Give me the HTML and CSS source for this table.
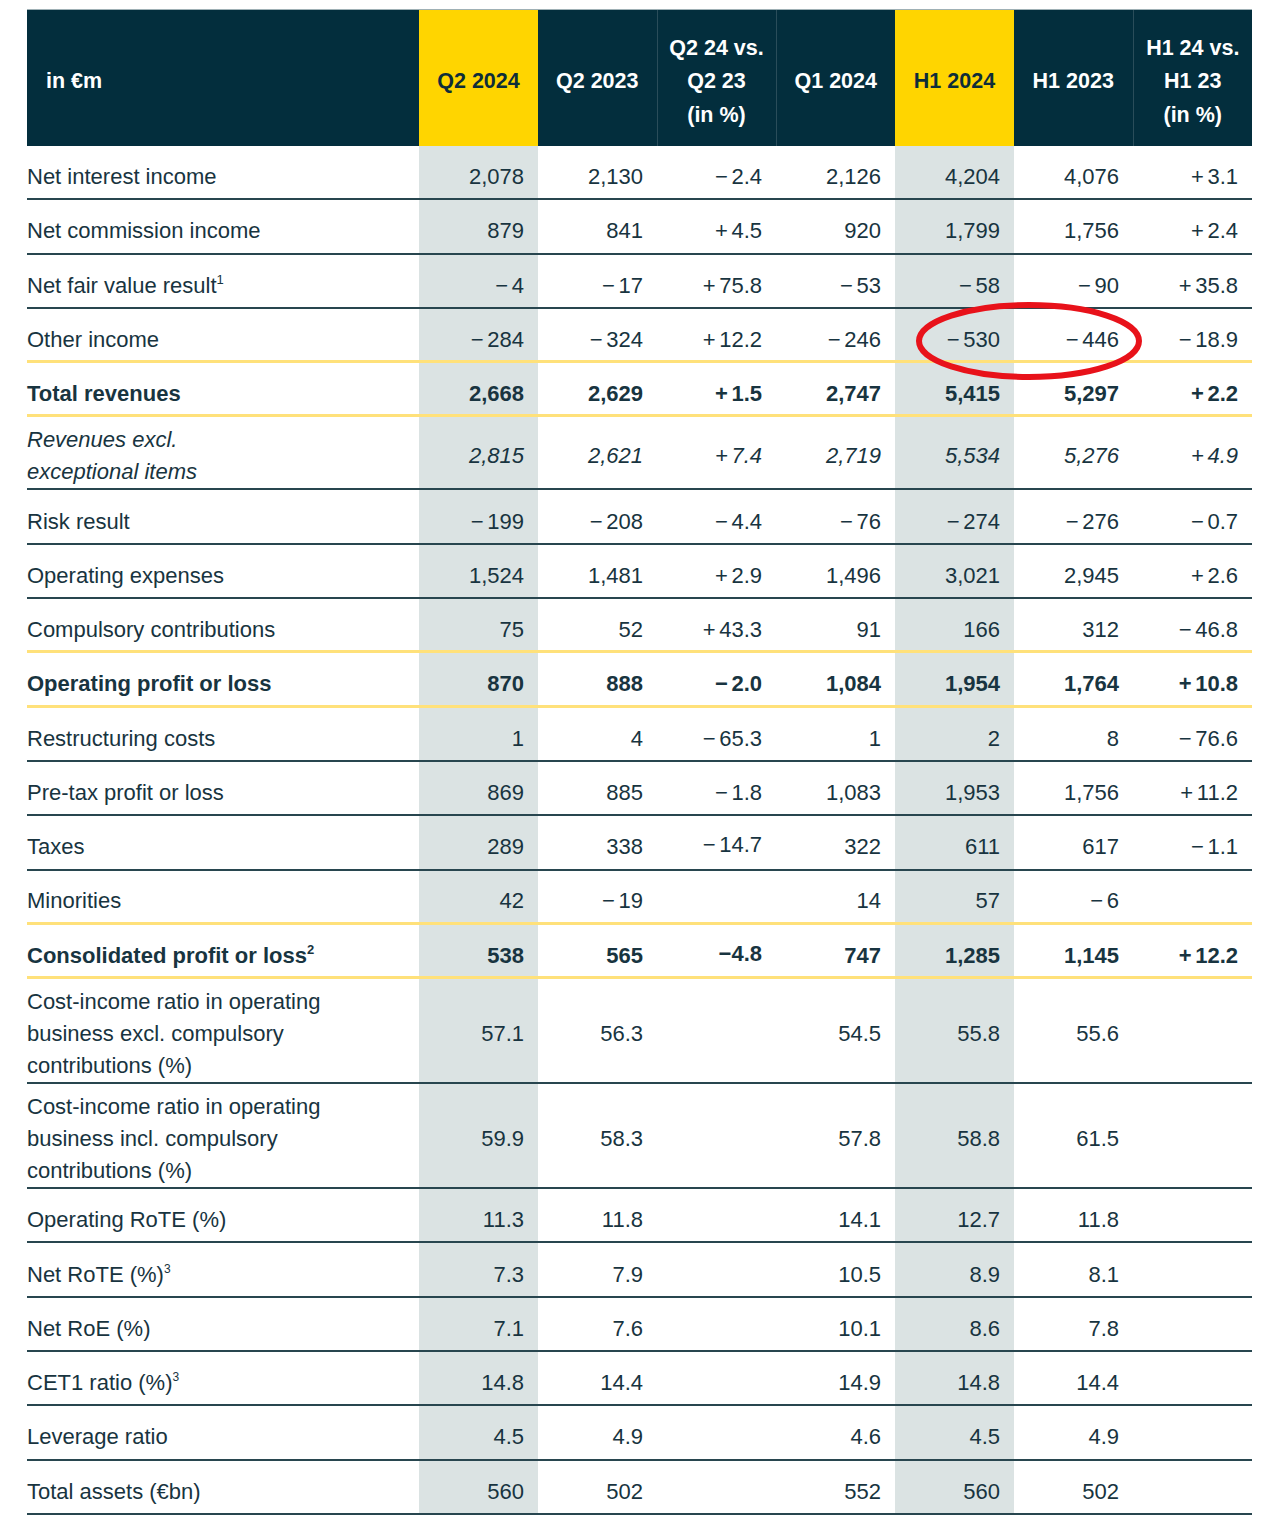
FILE: index.html
```html
<!DOCTYPE html>
<html lang="en">
<head>
<meta charset="utf-8">
<title>Key figures</title>
<link rel="stylesheet" href="styles.css">
</head>
<body>
<div class="page">
<table class="fig">
  <colgroup>
    <col class="c-label"><col class="c-num"><col class="c-num"><col class="c-num"><col class="c-num"><col class="c-num"><col class="c-num"><col class="c-num">
  </colgroup>
  <thead>
    <tr>
      <th class="h-label">in €m</th>
      <th class="hl">Q2 2024</th>
      <th>Q2 2023</th>
      <th class="sep">Q2 24 vs.<br>Q2 23<br>(in %)</th>
      <th class="sep">Q1 2024</th>
      <th class="hl">H1 2024</th>
      <th>H1 2023</th>
      <th class="sep">H1 24 vs.<br>H1 23<br>(in %)</th>
    </tr>
  </thead>
  <tbody>
    <tr><td>Net interest income</td><td>2,078</td><td>2,130</td><td>−&#8198;2.4</td><td>2,126</td><td>4,204</td><td>4,076</td><td>+&#8198;3.1</td></tr>
    <tr><td>Net commission income</td><td>879</td><td>841</td><td>+&#8198;4.5</td><td>920</td><td>1,799</td><td>1,756</td><td>+&#8198;2.4</td></tr>
    <tr><td>Net fair value result<sup>1</sup></td><td>−&#8198;4</td><td>−&#8198;17</td><td>+&#8198;75.8</td><td>−&#8198;53</td><td>−&#8198;58</td><td>−&#8198;90</td><td>+&#8198;35.8</td></tr>
    <tr class="yb"><td>Other income</td><td>−&#8198;284</td><td>−&#8198;324</td><td>+&#8198;12.2</td><td>−&#8198;246</td><td>−&#8198;530</td><td>−&#8198;446</td><td>−&#8198;18.9</td></tr>
    <tr class="bold yb"><td>Total revenues</td><td>2,668</td><td>2,629</td><td>+&#8198;1.5</td><td>2,747</td><td>5,415</td><td>5,297</td><td>+&#8198;2.2</td></tr>
    <tr class="ital two"><td>Revenues excl.<br>exceptional items</td><td>2,815</td><td>2,621</td><td>+&#8198;7.4</td><td>2,719</td><td>5,534</td><td>5,276</td><td>+&#8198;4.9</td></tr>
    <tr><td>Risk result</td><td>−&#8198;199</td><td>−&#8198;208</td><td>−&#8198;4.4</td><td>−&#8198;76</td><td>−&#8198;274</td><td>−&#8198;276</td><td>−&#8198;0.7</td></tr>
    <tr><td>Operating expenses</td><td>1,524</td><td>1,481</td><td>+&#8198;2.9</td><td>1,496</td><td>3,021</td><td>2,945</td><td>+&#8198;2.6</td></tr>
    <tr class="yb"><td>Compulsory contributions</td><td>75</td><td>52</td><td>+&#8198;43.3</td><td>91</td><td>166</td><td>312</td><td>−&#8198;46.8</td></tr>
    <tr class="bold yb"><td>Operating profit or loss</td><td>870</td><td>888</td><td>−&#8198;2.0</td><td>1,084</td><td>1,954</td><td>1,764</td><td>+&#8198;10.8</td></tr>
    <tr><td>Restructuring costs</td><td>1</td><td>4</td><td>−&#8198;65.3</td><td>1</td><td>2</td><td>8</td><td>−&#8198;76.6</td></tr>
    <tr><td>Pre-tax profit or loss</td><td>869</td><td>885</td><td>−&#8198;1.8</td><td>1,083</td><td>1,953</td><td>1,756</td><td>+&#8198;11.2</td></tr>
    <tr><td>Taxes</td><td>289</td><td>338</td><td class="lift">−&#8198;14.7</td><td>322</td><td>611</td><td>617</td><td>−&#8198;1.1</td></tr>
    <tr class="yb"><td>Minorities</td><td>42</td><td>−&#8198;19</td><td></td><td>14</td><td>57</td><td>−&#8198;6</td><td></td></tr>
    <tr class="bold yb"><td>Consolidated profit or loss<sup>2</sup></td><td>538</td><td>565</td><td class="lift">−4.8</td><td>747</td><td>1,285</td><td>1,145</td><td>+&#8198;12.2</td></tr>
    <tr class="three"><td>Cost-income ratio in operating<br>business excl. compulsory<br>contributions (%)</td><td>57.1</td><td>56.3</td><td></td><td>54.5</td><td>55.8</td><td>55.6</td><td></td></tr>
    <tr class="three"><td>Cost-income ratio in operating<br>business incl. compulsory<br>contributions (%)</td><td>59.9</td><td>58.3</td><td></td><td>57.8</td><td>58.8</td><td>61.5</td><td></td></tr>
    <tr><td>Operating RoTE (%)</td><td>11.3</td><td>11.8</td><td></td><td>14.1</td><td>12.7</td><td>11.8</td><td></td></tr>
    <tr><td>Net RoTE (%)<sup class="thin">3</sup></td><td>7.3</td><td>7.9</td><td></td><td>10.5</td><td>8.9</td><td>8.1</td><td></td></tr>
    <tr><td>Net RoE (%)</td><td>7.1</td><td>7.6</td><td></td><td>10.1</td><td>8.6</td><td>7.8</td><td></td></tr>
    <tr><td>CET1 ratio (%)<sup class="thin">3</sup></td><td>14.8</td><td>14.4</td><td></td><td>14.9</td><td>14.8</td><td>14.4</td><td></td></tr>
    <tr><td>Leverage ratio</td><td>4.5</td><td>4.9</td><td></td><td>4.6</td><td>4.5</td><td>4.9</td><td></td></tr>
    <tr><td>Total assets (€bn)</td><td>560</td><td>502</td><td></td><td>552</td><td>560</td><td>502</td><td></td></tr>
  </tbody>
</table>
<svg class="mark" width="240" height="84" viewBox="0 0 240 84" aria-hidden="true">
  <ellipse cx="115" cy="41" rx="110" ry="36" fill="none" stroke="#e8121a" stroke-width="6"/>
</svg>
</div>
</body>
</html>
```

FILE: styles.css
```css
html, body {
  margin: 0;
  padding: 0;
  background: #ffffff;
}

.page {
  position: relative;
  padding: 9px 0 0 27px;
  font-family: "Liberation Sans", Arial, sans-serif;
  color: #183440;
}

.fig {
  border-collapse: collapse;
  table-layout: fixed;
  width: 1225px;
  font-size: 22px;
}

.c-label { width: 392px; }
.c-num { width: 119px; }

thead th {
  background: #032e3d;
  color: #ffffff;
  font-weight: bold;
  font-size: 21.5px;
  line-height: 33.5px;
  height: 128px;
  padding: 8px 0 0 0;
  text-align: center;
  vertical-align: middle;
  border-top: 1px solid #9fb0b5;
}

thead th.sep {
  border-left: 1px solid #2a4d5a;
}

thead th.h-label {
  text-align: left;
  padding-left: 19px;
}

thead th.hl {
  background: #ffd500;
  color: #0e2d39;
}

tbody td {
  height: 42.3px;
  padding: 10px 14px 0 0;
  text-align: right;
  vertical-align: middle;
  border-bottom: 2px solid #28464f;
  line-height: 32px;
  white-space: nowrap;
}

tbody td:first-child {
  text-align: left;
  padding-left: 0;
}

tbody td:nth-child(2),
tbody td:nth-child(6) {
  background: #dbe3e3;
}

tbody tr.yb td {
  height: 41.3px;
  border-bottom: 3px solid #ffe17a;
}

tbody tr.bold td {
  font-weight: bold;
}

tbody tr.ital td {
  font-style: italic;
}

tbody tr.two td {
  height: 64px;
  padding-top: 7px;
}

tbody tr.three td {
  height: 96px;
  padding-top: 7px;
}

td.lift {
  position: relative;
  top: -2px;
}

sup {
  font-size: 13px;
  line-height: 0;
  vertical-align: 9px;
}

sup.thin {
  font-size: 12px;
}

.mark {
  position: absolute;
  left: 914px;
  top: 300px;
}
```
